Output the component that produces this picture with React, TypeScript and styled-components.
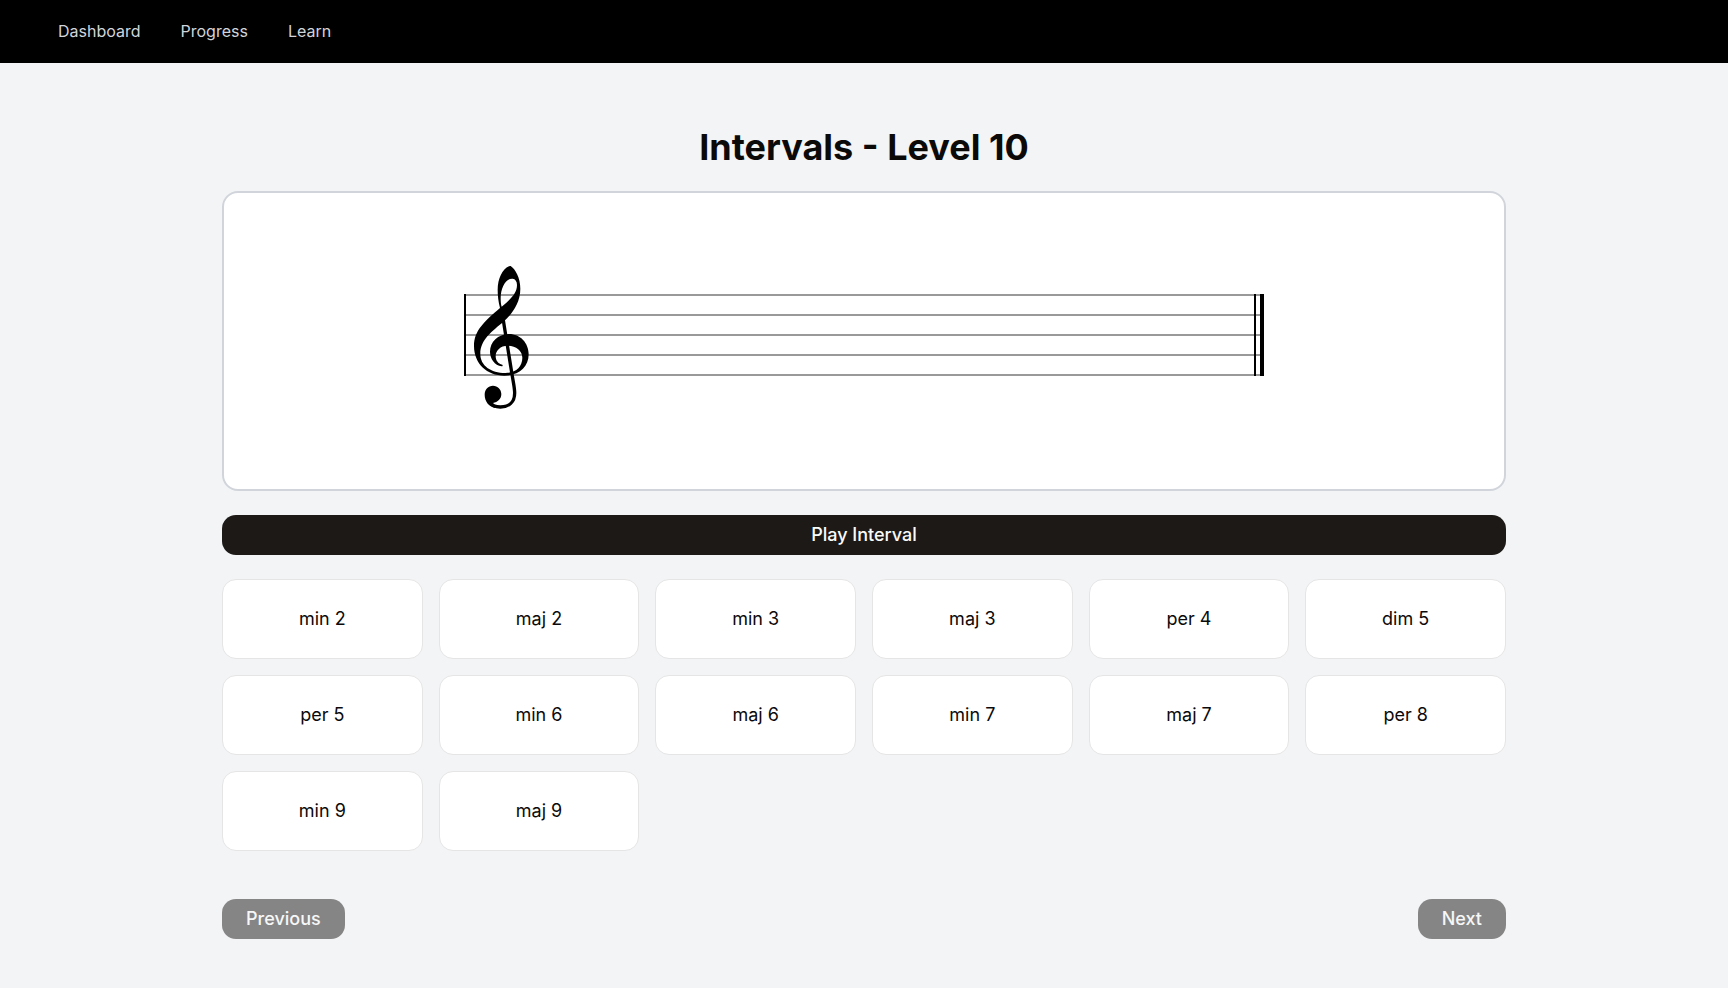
import React from "react";
import styled, { createGlobalStyle } from "styled-components";

const GlobalStyle = createGlobalStyle`
  *, *::before, *::after { box-sizing: border-box; }
  body {
    margin: 0;
    background: #f3f4f6;
    color: #0c0a09;
    font-family: Inter, "Liberation Sans", sans-serif;
    font-size: 16px;
    line-height: 24px;
  }
  button { font: inherit; cursor: pointer; }
`;

const Header = styled.header`
  background: #000;
  padding: 19px 58px 20px;
`;

const Nav = styled.nav`
  display: flex;
  gap: 40px;
`;

const NavLink = styled.a`
  color: #d1d5db;
  text-decoration: none;
`;

const Main = styled.main`
  display: flex;
  flex-direction: column;
  gap: 24px;
  max-width: 1332px;
  margin: 0 auto;
  padding: 64px 24px 48px;
`;

const Title = styled.h1`
  margin: 0;
  font-size: 36px;
  line-height: 40px;
  font-weight: 700;
  text-align: center;
`;

const StaffCard = styled.section`
  display: flex;
  justify-content: center;
  background: #fff;
  border: 2px solid #d1d5db;
  border-radius: 16px;
`;

const StaffDrawing = styled.svg`
  display: block;
  width: 100%;
  max-width: 800px;
  height: 296px;
`;

const ActionButton = styled.button`
  height: 40px;
  padding: 0 24px;
  border: 0;
  border-radius: 14px;
  background: #1c1917;
  color: #fafaf9;
  font-size: 18px;
  font-weight: 500;

  &:disabled {
    opacity: 0.5;
    cursor: default;
  }
`;

const AnswerGrid = styled.div`
  display: grid;
  grid-template-columns: repeat(6, 1fr);
  gap: 16px;
`;

const AnswerButton = styled.button`
  height: 80px;
  padding: 0;
  border: 1px solid #e5e5e5;
  border-radius: 14px;
  background: #fff;
  color: #0c0a09;
  font-size: 18px;
`;

const Pager = styled.div`
  display: flex;
  justify-content: space-between;
  margin-top: 24px;
`;

const links = ["Dashboard", "Progress", "Learn"];

const intervals = [
  "min 2", "maj 2", "min 3", "maj 3", "per 4", "dim 5",
  "per 5", "min 6", "maj 6", "min 7", "maj 7", "per 8",
  "min 9", "maj 9",
];

const staffLines = [102, 122, 142, 162, 182];

function TrebleClef() {
  return (
    <g transform="translate(-24 57) scale(0.33333)" fill="#000">
      {/* Upper loop and the broad sweep down to the bowl */}
      <path
        fillRule="evenodd"
        d="M212 48 C226 57 241 84 241 116 C241 158 218 189 192 214 C156 245 121 269 121 312 C121 347 153 369 196 369 C226 369 247 351 247 323 C247 302 228 287 203 287 C181 287 167 302 167 318 C167 331 174 341 187 344 C189 346 188 349 185 349 C164 346 150 326 150 305 C150 276 174 252 207 252 C241 252 266 279 266 313 C266 351 236 377 193 377 C141 377 102 341 102 288 C102 241 134 214 180 174 C175 154 173 137 173 119 C173 87 187 57 207 49 Q210 47 212 48 Z
           M218 86 C197 84 182 114 182 145 C182 156 183 164 185 170 C211 148 231 130 231 105 C231 94 226 87 218 86 Z"
      />
      {/* Stem and hook */}
      <path
        d="M189 205 L216 373 C220 398 224 413 224 429 C224 456 207 471 181 471 C165 471 154 465 147 456"
        fill="none"
        stroke="#000"
        strokeWidth="10"
      />
      <path d="M159 407 C173 407 184 418 184 432 C184 447 173 456 159 459 Q162 465 170 467 L165 474 C147 469 134 455 134 434 C134 418 145 407 159 407 Z" />
    </g>
  );
}

function Staff() {
  return (
    <StaffDrawing viewBox="0 0 800 296" role="img" aria-label="Empty treble staff">
      {staffLines.map((y) => (
        <line key={y} x1="0" x2="800" y1={y} y2={y} stroke="#999" strokeWidth="2" />
      ))}
      <rect x="0" y="101" width="2" height="82" />
      <rect x="790" y="101" width="2" height="82" />
      <rect x="796" y="101" width="4" height="82" />
      <TrebleClef />
    </StaffDrawing>
  );
}

export default function App() {
  return (
    <>
      <GlobalStyle />
      <Header>
        <Nav aria-label="Main">
          {links.map((label) => (
            <NavLink key={label} href={`#${label.toLowerCase()}`}>{label}</NavLink>
          ))}
        </Nav>
      </Header>
      <Main>
        <Title>Intervals - Level 10</Title>
        <StaffCard>
          <Staff />
        </StaffCard>
        <ActionButton type="button">Play Interval</ActionButton>
        <AnswerGrid>
          {intervals.map((name) => (
            <AnswerButton key={name} type="button">{name}</AnswerButton>
          ))}
        </AnswerGrid>
        <Pager>
          <ActionButton type="button" disabled>Previous</ActionButton>
          <ActionButton type="button" disabled>Next</ActionButton>
        </Pager>
      </Main>
    </>
  );
}
